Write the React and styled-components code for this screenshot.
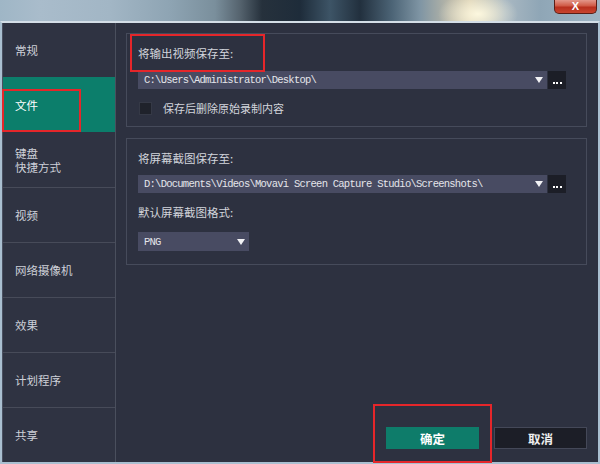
import styled, { createGlobalStyle } from 'styled-components';

const GlobalStyle = createGlobalStyle`
    html, body {
        margin: 0;
        padding: 0;
        background: #2d3140;
    }
    body {
        font-family: "Noto Sans CJK SC", "Noto Sans", sans-serif;
    }
`;

const navItems = [
    { label: '常规' },
    { label: '文件', active: true },
    { label: '键盘\n快捷方式' },
    { label: '视频' },
    { label: '网络摄像机' },
    { label: '效果' },
    { label: '计划程序' },
    { label: '共享' },
];

export default function App() {

    return(
        <>
        <GlobalStyle />
        <Screen>
            <Backdrop>
                <CloseButton>X</CloseButton>
            </Backdrop>
            <Dialog>
                <Sidebar>
                    {navItems.map((item) => (
                        <NavItem key={item.label} $active={item.active}>
                            {item.label}
                        </NavItem>
                    ))}
                </Sidebar>
                <Main>
                    <Group $pb={11}>
                        <Title $marked>将输出视频保存至:</Title>
                        <PathRow $mt={10}>
                            <PathSelect>
                                <span>C:\Users\Administrator\Desktop\</span>
                                <Arrow />
                            </PathSelect>
                            <BrowseButton>
                                <Dot /><Dot /><Dot />
                            </BrowseButton>
                        </PathRow>
                        <CheckRow>
                            <CheckBox />
                            <CheckLabel>保存后删除原始录制内容</CheckLabel>
                        </CheckRow>
                    </Group>
                    <Group $pb={13}>
                        <Title>将屏幕截图保存至:</Title>
                        <PathRow $mt={9}>
                            <PathSelect>
                                <span>D:\Documents\Videos\Movavi Screen Capture Studio\Screenshots\</span>
                                <Arrow />
                            </PathSelect>
                            <BrowseButton>
                                <Dot /><Dot /><Dot />
                            </BrowseButton>
                        </PathRow>
                        <Title $mt={11}>默认屏幕截图格式:</Title>
                        <FormatSelect>
                            <span>PNG</span>
                            <Arrow />
                        </FormatSelect>
                    </Group>
                    <Actions>
                        <OkButton>确定</OkButton>
                        <CancelButton>取消</CancelButton>
                    </Actions>
                </Main>
            </Dialog>
        </Screen>
        </>
    );

}

const Screen = styled.div`
    width: 600px;
    height: 464px;
    display: flex;
    flex-direction: column;
    overflow: hidden;
`;

const Backdrop = styled.div`
    height: 21px;
    flex: none;
    display: flex;
    justify-content: flex-end;
    align-items: flex-start;
    padding-right: 3px;
    background:
        radial-gradient(ellipse 40px 22px at 478px 14px, rgba(255, 250, 225, 0.95), rgba(255, 240, 200, 0) 100%),
        linear-gradient(90deg,
            #9fb6c6 0px, #a9bccb 40px, #a2b6c5 110px, #8ea4b3 170px,
            #7a8f9c 215px, #55636e 240px, #26313c 262px, #1e2c3a 300px,
            #3d5466 330px, #22303e 360px, #4c6476 392px, #7f95a4 420px,
            #b9b7a8 450px, #d8cdb0 470px, #a9b8c2 505px, #8fa6b6 540px, #9fb5c4 600px);
`;

const CloseButton = styled.div`
    width: 41px;
    height: 13px;
    border: 1px solid #5b1e16;
    border-top: none;
    border-radius: 0 0 5px 5px;
    background: linear-gradient(180deg, #e3978a 0%, #d05a46 45%, #b8301e 55%, #c8452f 100%);
    color: #ffffff;
    font-family: "Liberation Sans", sans-serif;
    font-weight: bold;
    font-size: 11px;
    line-height: 13px;
    text-align: center;
`;

const Dialog = styled.div`
    flex: 1;
    display: flex;
    border: 2px solid #a9bfd0;
    border-top-color: #d4dee7;
    background: #2d3140;
`;

const Sidebar = styled.ul`
    width: 112px;
    flex: none;
    margin: 0;
    padding: 0;
    list-style-type: none;
    display: flex;
    flex-direction: column;
    background: #2f3342;
    border-left: 1px solid #4a5060;
    border-right: 1px solid #4a4f5d;
`;

const NavItem = styled.li`
    flex: 1;
    position: relative;
    display: flex;
    align-items: center;
    padding: 0 12px;
    white-space: pre-line;
    font-size: 11.5px;
    line-height: 14px;
    color: ${(p) => (p.$active ? '#ffffff' : '#cdd0d8')};
    background: ${(p) => (p.$active ? '#0c7e6b' : 'transparent')};
    border-top: 1px solid ${(p) => (p.$active ? '#0c7e6b' : '#474b59')};

    &:first-child {
        border-top: none;
    }

    ${(p) => p.$active && `
        & + li { border-top-color: #2f3342; }
        &::after {
            content: '';
            position: absolute;
            top: 11px;
            left: -1px;
            width: 79px;
            bottom: 0;
            border: 2px solid #e5262a;
            box-sizing: border-box;
        }
    `}
`;

const Main = styled.div`
    flex: 1;
    display: flex;
    flex-direction: column;
    padding: 10px 11px 13px 10px;
    gap: 11px;
`;

const Group = styled.section`
    display: flex;
    flex-direction: column;
    align-items: flex-start;
    padding: 11px 20px ${(p) => p.$pb}px 11px;
    border: 1px solid #464b5b;
`;

const Title = styled.div`
    position: relative;
    margin-top: ${(p) => p.$mt || 0}px;
    font-size: 11.5px;
    line-height: 16px;
    color: #d2d5dc;

    ${(p) => p.$marked && `
        &::after {
            content: '';
            position: absolute;
            top: -11px;
            left: -8px;
            width: 135px;
            height: 38px;
            border: 2px solid #e5262a;
            box-sizing: border-box;
        }
    `}
`;

const PathRow = styled.div`
    align-self: stretch;
    display: flex;
    gap: 1px;
    margin-top: ${(p) => p.$mt}px;
    height: 18px;
`;

const SelectBox = styled.div`
    display: flex;
    align-items: center;
    justify-content: space-between;
    padding: 0 4px 0 6px;
    background: #484b62;
    color: #e4e5ea;
    font-family: "Liberation Mono", monospace;
    font-size: 10.5px;
    letter-spacing: -0.75px;
    white-space: nowrap;
`;

const PathSelect = styled(SelectBox)`
    flex: 1;
`;

const FormatSelect = styled(SelectBox)`
    width: 101px;
    height: 19px;
    margin-top: 12px;
`;

const Arrow = styled.i`
    width: 0;
    height: 0;
    border-left: 4px solid transparent;
    border-right: 4px solid transparent;
    border-top: 6px solid #f2f2f5;
`;

const BrowseButton = styled.div`
    width: 18px;
    display: flex;
    justify-content: center;
    align-items: flex-end;
    gap: 1.5px;
    padding-bottom: 5px;
    box-sizing: border-box;
    background: #1c1e27;
`;

const Dot = styled.i`
    width: 2px;
    height: 2px;
    background: #ffffff;
`;

const CheckRow = styled.div`
    display: flex;
    align-items: center;
    gap: 11px;
    margin-top: 12px;
    padding-left: 1px;
`;

const CheckBox = styled.span`
    width: 13px;
    height: 13px;
    background: #1f222b;
    border: 1px solid #353946;
    box-sizing: border-box;
`;

const CheckLabel = styled.span`
    font-size: 11px;
    line-height: 14px;
    color: #d2d5dc;
`;

const Actions = styled.div`
    margin-top: auto;
    display: flex;
    justify-content: flex-end;
    gap: 15px;
    padding-right: 0;
`;

const Button = styled.button`
    width: 93px;
    height: 22px;
    padding: 0;
    font-family: "Noto Sans CJK SC", sans-serif;
    font-weight: bold;
    font-size: 12.5px;
    color: #ffffff;
`;

const OkButton = styled(Button)`
    position: relative;
    border: none;
    background: #0e7c6a;

    &::after {
        content: '';
        position: absolute;
        top: -23px;
        left: -13px;
        right: -13px;
        bottom: -14px;
        border: 2px solid #e5262a;
    }
`;

const CancelButton = styled(Button)`
    border: 1px solid #444858;
    background: #1c1e27;
    color: #eeeeee;
`;
